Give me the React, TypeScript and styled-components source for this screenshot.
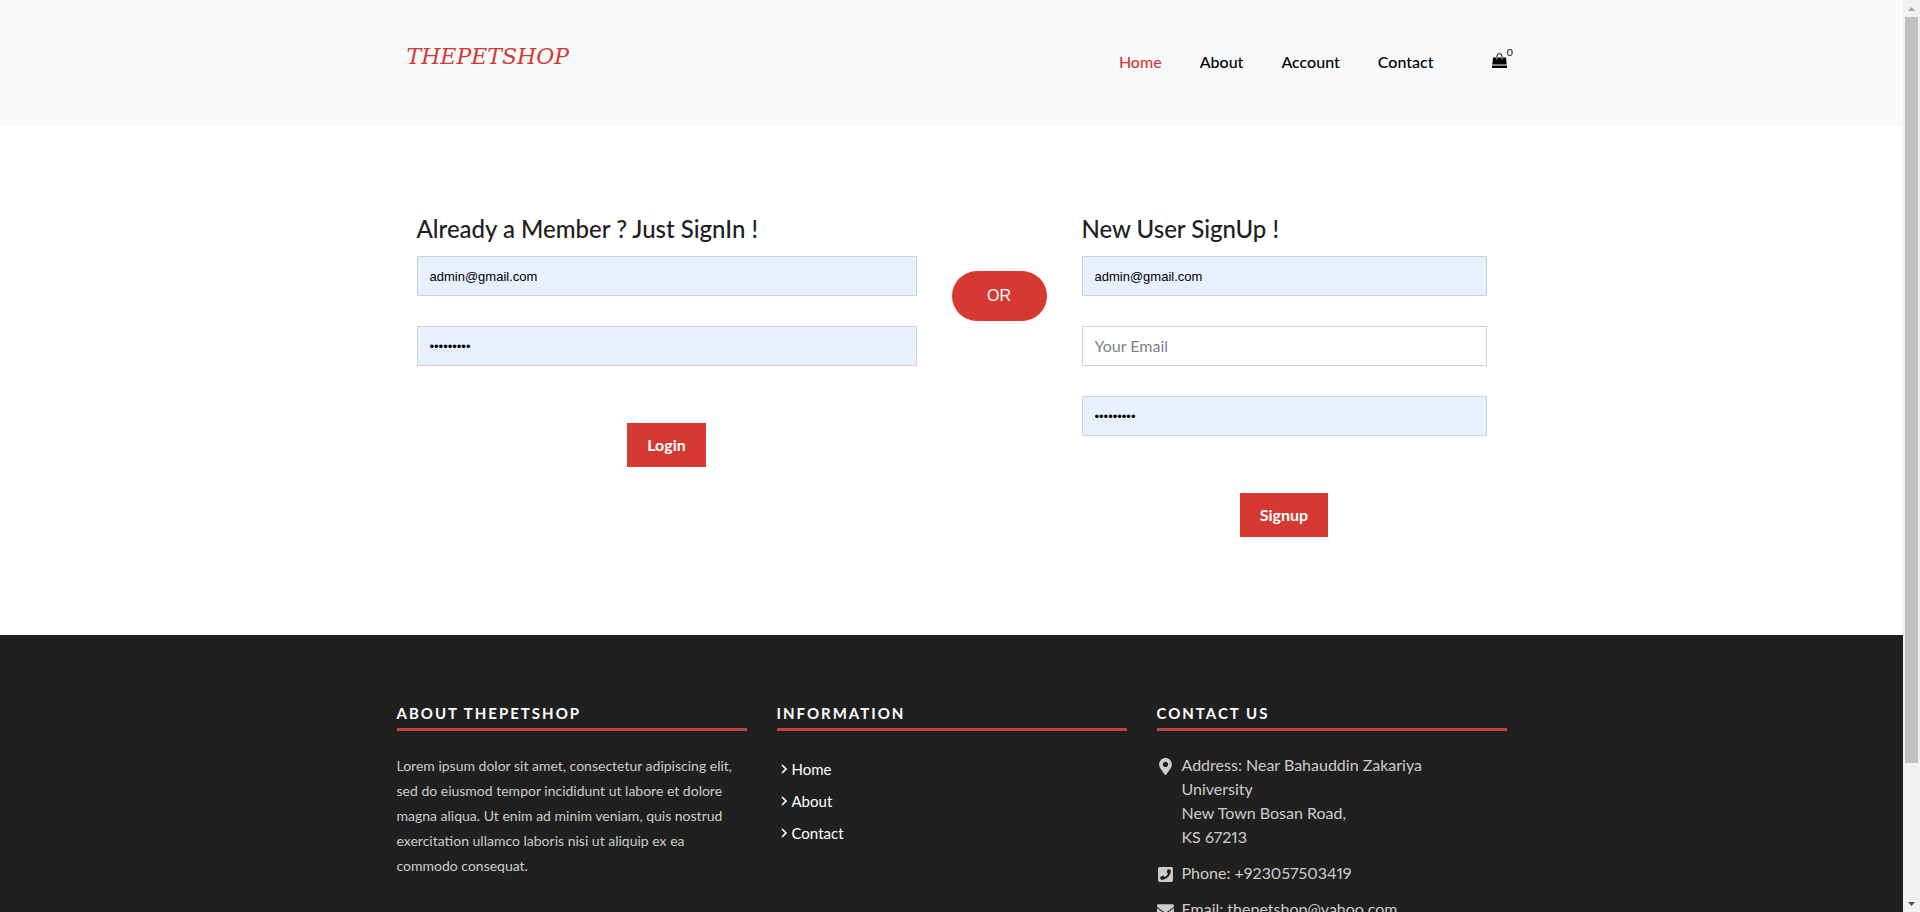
import React from "react";
import styled, { createGlobalStyle } from "styled-components";
import { FaMapMarkerAlt, FaPhoneSquare, FaEnvelope } from "react-icons/fa";

const RED = "#d43a32";

const GlobalStyle = createGlobalStyle`
  *, *::before, *::after { box-sizing: border-box; }
  body {
    margin: 0;
    background: #fff;
    color: #212529;
    font: 400 16px/24px Lato, sans-serif;
    font-variant-numeric: lining-nums proportional-nums;
  }
  h2, h3, p, ul { margin: 0; padding: 0; }
  ul { list-style: none; }
  a { text-decoration: none; }
  button, input { font-family: inherit; }
`;

const Window = styled.div`
  display: grid;
  grid-template-columns: minmax(0, 1fr) 17px;
  height: 100vh;
  overflow: hidden;
`;

const Page = styled.div`
  display: flex;
  flex-direction: column;
  min-height: 0;
  overflow: hidden;
`;

const Container = styled.div`
  width: 100%;
  max-width: 1140px;
  margin: 0 auto;
  padding: 0 15px;
`;

const Header = styled.header`
  flex: none;
  background: #f8f9fb;
  padding: 40px 0 42px;
`;

const HeaderRow = styled(Container)`
  display: flex;
  justify-content: space-between;
  align-items: center;
  height: 44px;
`;

const Logo = styled.a`
  margin: 0 0 10px 10px;
  color: ${RED};
  font: italic 400 22px/24px "DejaVu Serif", serif;
`;

const Nav = styled.nav`
  display: flex;
  align-items: center;
  gap: 38px;
`;

const NavLink = styled.a<{ $active?: boolean }>`
  color: ${(p) => (p.$active ? RED : "#000")};
  font-weight: 500;
`;

const Cart = styled.a`
  position: relative;
  display: flex;
  margin: 0 0 4px 20px;
  color: #000;
  svg { display: block; }
`;

const CartCount = styled.span`
  position: absolute;
  left: 100%;
  bottom: 10px;
  font-size: 10px;
  line-height: 12px;
`;

const Main = styled.main`
  flex: none;
  padding: 87px 0 98px;
`;

const Forms = styled(Container)`
  display: grid;
  grid-template-columns: 500fr 165fr 405fr;
  align-items: start;
  padding: 0 35px;
`;

const Form = styled.form`
  display: flex;
  flex-direction: column;
  gap: 30px;
`;

const FormTitle = styled.h2`
  margin-bottom: -19px;
  color: #202020;
  font-size: 24px;
  font-weight: 500;
  line-height: 32px;
`;

const Field = styled.input<{ $filled?: boolean }>`
  width: 100%;
  height: 40px;
  padding: ${(p) => (p.$filled ? "0 12px" : "0 12px 2px")};
  border: 1px solid #ced4da;
  border-radius: 0;
  outline: none;
  color: #000;
  background: ${(p) => (p.$filled ? "#e8f0fe" : "#fff")};
  font-family: ${(p) => (p.$filled ? '"Liberation Sans", sans-serif' : "inherit")};
  font-size: ${(p) => (p.$filled ? "13px" : "16px")};
  &::placeholder { color: #7b838a; opacity: 1; }
`;

const Submit = styled.button`
  align-self: center;
  height: 44px;
  margin-top: 27px;
  padding: 0 20px 2px;
  border: 0;
  background: ${RED};
  color: #fff;
  font-size: 16px;
  font-weight: 700;
`;

const Or = styled.div`
  justify-self: center;
  width: 95px;
  margin-top: 58px;
  border-radius: 25px;
  background: ${RED};
  color: #fff;
  font: 400 16px/50px "Liberation Sans", sans-serif;
  text-align: center;
`;

const Footer = styled.footer`
  flex: 1 0 auto;
  background: #202020;
  color: #ccc;
  padding: 66px 0 60px;
`;

const FooterRow = styled(Container)`
  display: grid;
  grid-template-columns: repeat(3, 1fr);
  gap: 30px;
`;

const FooterTitle = styled.h3`
  margin-bottom: 22px;
  padding-bottom: 3px;
  border-bottom: 3px solid #c2423e;
  color: #fff;
  font-size: 15px;
  font-weight: 700;
  line-height: 24px;
  letter-spacing: 2px;
  text-transform: uppercase;
`;

const Blurb = styled.p`
  font-size: 14px;
  line-height: 25px;
`;

const Links = styled.ul`
  padding: 0 4px;
`;

const FooterLink = styled.a`
  display: flex;
  align-items: center;
  gap: 5px;
  color: #fff;
  font-size: 15px;
  line-height: 32px;
`;

const ContactItem = styled.li`
  display: grid;
  grid-template-columns: 25px 1fr;
  margin-bottom: 12px;
  padding-right: 40px;
  a { color: inherit; }
  svg {
    display: block;
    justify-self: start;
    width: auto;
    height: 17px;
    margin-top: 5px;
  }
`;

const Scrollbar = styled.div`
  display: flex;
  flex-direction: column;
  background: #f1f1f1;
`;

const ScrollArrow = styled.button`
  display: grid;
  place-items: center;
  flex: none;
  height: 17px;
  padding: 0;
  border: 0;
  background: none;
`;

const ScrollTrack = styled.div`
  flex: 1;
  padding: 0 2px;
`;

const ScrollThumb = styled.div`
  height: 85%;
  background: #c1c1c1;
`;

const Bag = () => (
  <svg width="15" height="15" viewBox="0 0 15 15" aria-hidden="true">
    <path d="M1 4.500h13l.7 7H.3zM0 12.500h15V15H0z" fill="currentColor" />
    <path d="M4.900 4.500V3.200a2.600 2.600 0 0 1 5.200 0v1.300" fill="none" stroke="currentColor" />
    <path d="M4.900 4.500v2M10.100 4.500v2" stroke="#f8f9fb" strokeWidth="0.8" />
  </svg>
);

const Chevron = () => (
  <svg width="6" height="10" viewBox="0 0 6 10" aria-hidden="true">
    <path d="M1 1l4 4-4 4" fill="none" stroke="currentColor" strokeWidth="1.6" />
  </svg>
);

const pages = ["Home", "About", "Account", "Contact"];
const information = ["Home", "About", "Contact"];

export default function App() {
  return (
    <>
      <GlobalStyle />
      <Window>
        <Page>
          <Header>
            <HeaderRow>
              <Logo href="#">THEPETSHOP</Logo>
              <Nav>
                {pages.map((name) => (
                  <NavLink key={name} href="#" $active={name === "Home"}>
                    {name}
                  </NavLink>
                ))}
                <Cart href="#" aria-label="Cart">
                  <Bag />
                  <CartCount>0</CartCount>
                </Cart>
              </Nav>
            </HeaderRow>
          </Header>

          <Main>
            <Forms>
              <Form>
                <FormTitle>Already a Member ? Just SignIn !</FormTitle>
                <Field $filled type="email" aria-label="Email" defaultValue="admin@gmail.com" />
                <Field $filled type="password" aria-label="Password" defaultValue="petshop12" />
                <Submit type="button">Login</Submit>
              </Form>
              <Or>OR</Or>
              <Form>
                <FormTitle>New User SignUp !</FormTitle>
                <Field $filled type="text" aria-label="Name" defaultValue="admin@gmail.com" />
                <Field type="email" aria-label="Your Email" placeholder="Your Email" />
                <Field $filled type="password" aria-label="Password" defaultValue="petshop12" />
                <Submit type="button">Signup</Submit>
              </Form>
            </Forms>
          </Main>

          <Footer>
            <FooterRow>
              <section>
                <FooterTitle>About ThePetShop</FooterTitle>
                <Blurb>
                  Lorem ipsum dolor sit amet, consectetur adipiscing elit, sed do eiusmod tempor
                  incididunt ut labore et dolore magna aliqua. Ut enim ad minim veniam, quis nostrud
                  exercitation ullamco laboris nisi ut aliquip ex ea commodo consequat.
                </Blurb>
              </section>
              <section>
                <FooterTitle>Information</FooterTitle>
                <Links>
                  {information.map((name) => (
                    <li key={name}>
                      <FooterLink href="#">
                        <Chevron />
                        {name}
                      </FooterLink>
                    </li>
                  ))}
                </Links>
              </section>
              <section>
                <FooterTitle>Contact Us</FooterTitle>
                <ul>
                  <ContactItem>
                    <FaMapMarkerAlt />
                    <span>
                      Address: Near Bahauddin Zakariya University
                      <br />
                      New Town Bosan Road,
                      <br />
                      KS 67213
                    </span>
                  </ContactItem>
                  <ContactItem>
                    <FaPhoneSquare />
                    <span>
                      Phone: <a href="tel:+923057503419">+923057503419</a>
                    </span>
                  </ContactItem>
                  <ContactItem>
                    <FaEnvelope />
                    <span>
                      Email: <a href="mailto:thepetshop@yahoo.com">thepetshop@yahoo.com</a>
                    </span>
                  </ContactItem>
                </ul>
              </section>
            </FooterRow>
          </Footer>
        </Page>

        <Scrollbar>
          <ScrollArrow type="button" aria-label="Scroll up">
            <svg width="7" height="4" viewBox="0 0 7 4"><path d="M0 4l3.500-4L7 4z" fill="#a3a3a3" /></svg>
          </ScrollArrow>
          <ScrollTrack>
            <ScrollThumb />
          </ScrollTrack>
          <ScrollArrow type="button" aria-label="Scroll down">
            <svg width="7" height="4" viewBox="0 0 7 4"><path d="M0 0l3.500 4L7 0z" fill="#505050" /></svg>
          </ScrollArrow>
        </Scrollbar>
      </Window>
    </>
  );
}
